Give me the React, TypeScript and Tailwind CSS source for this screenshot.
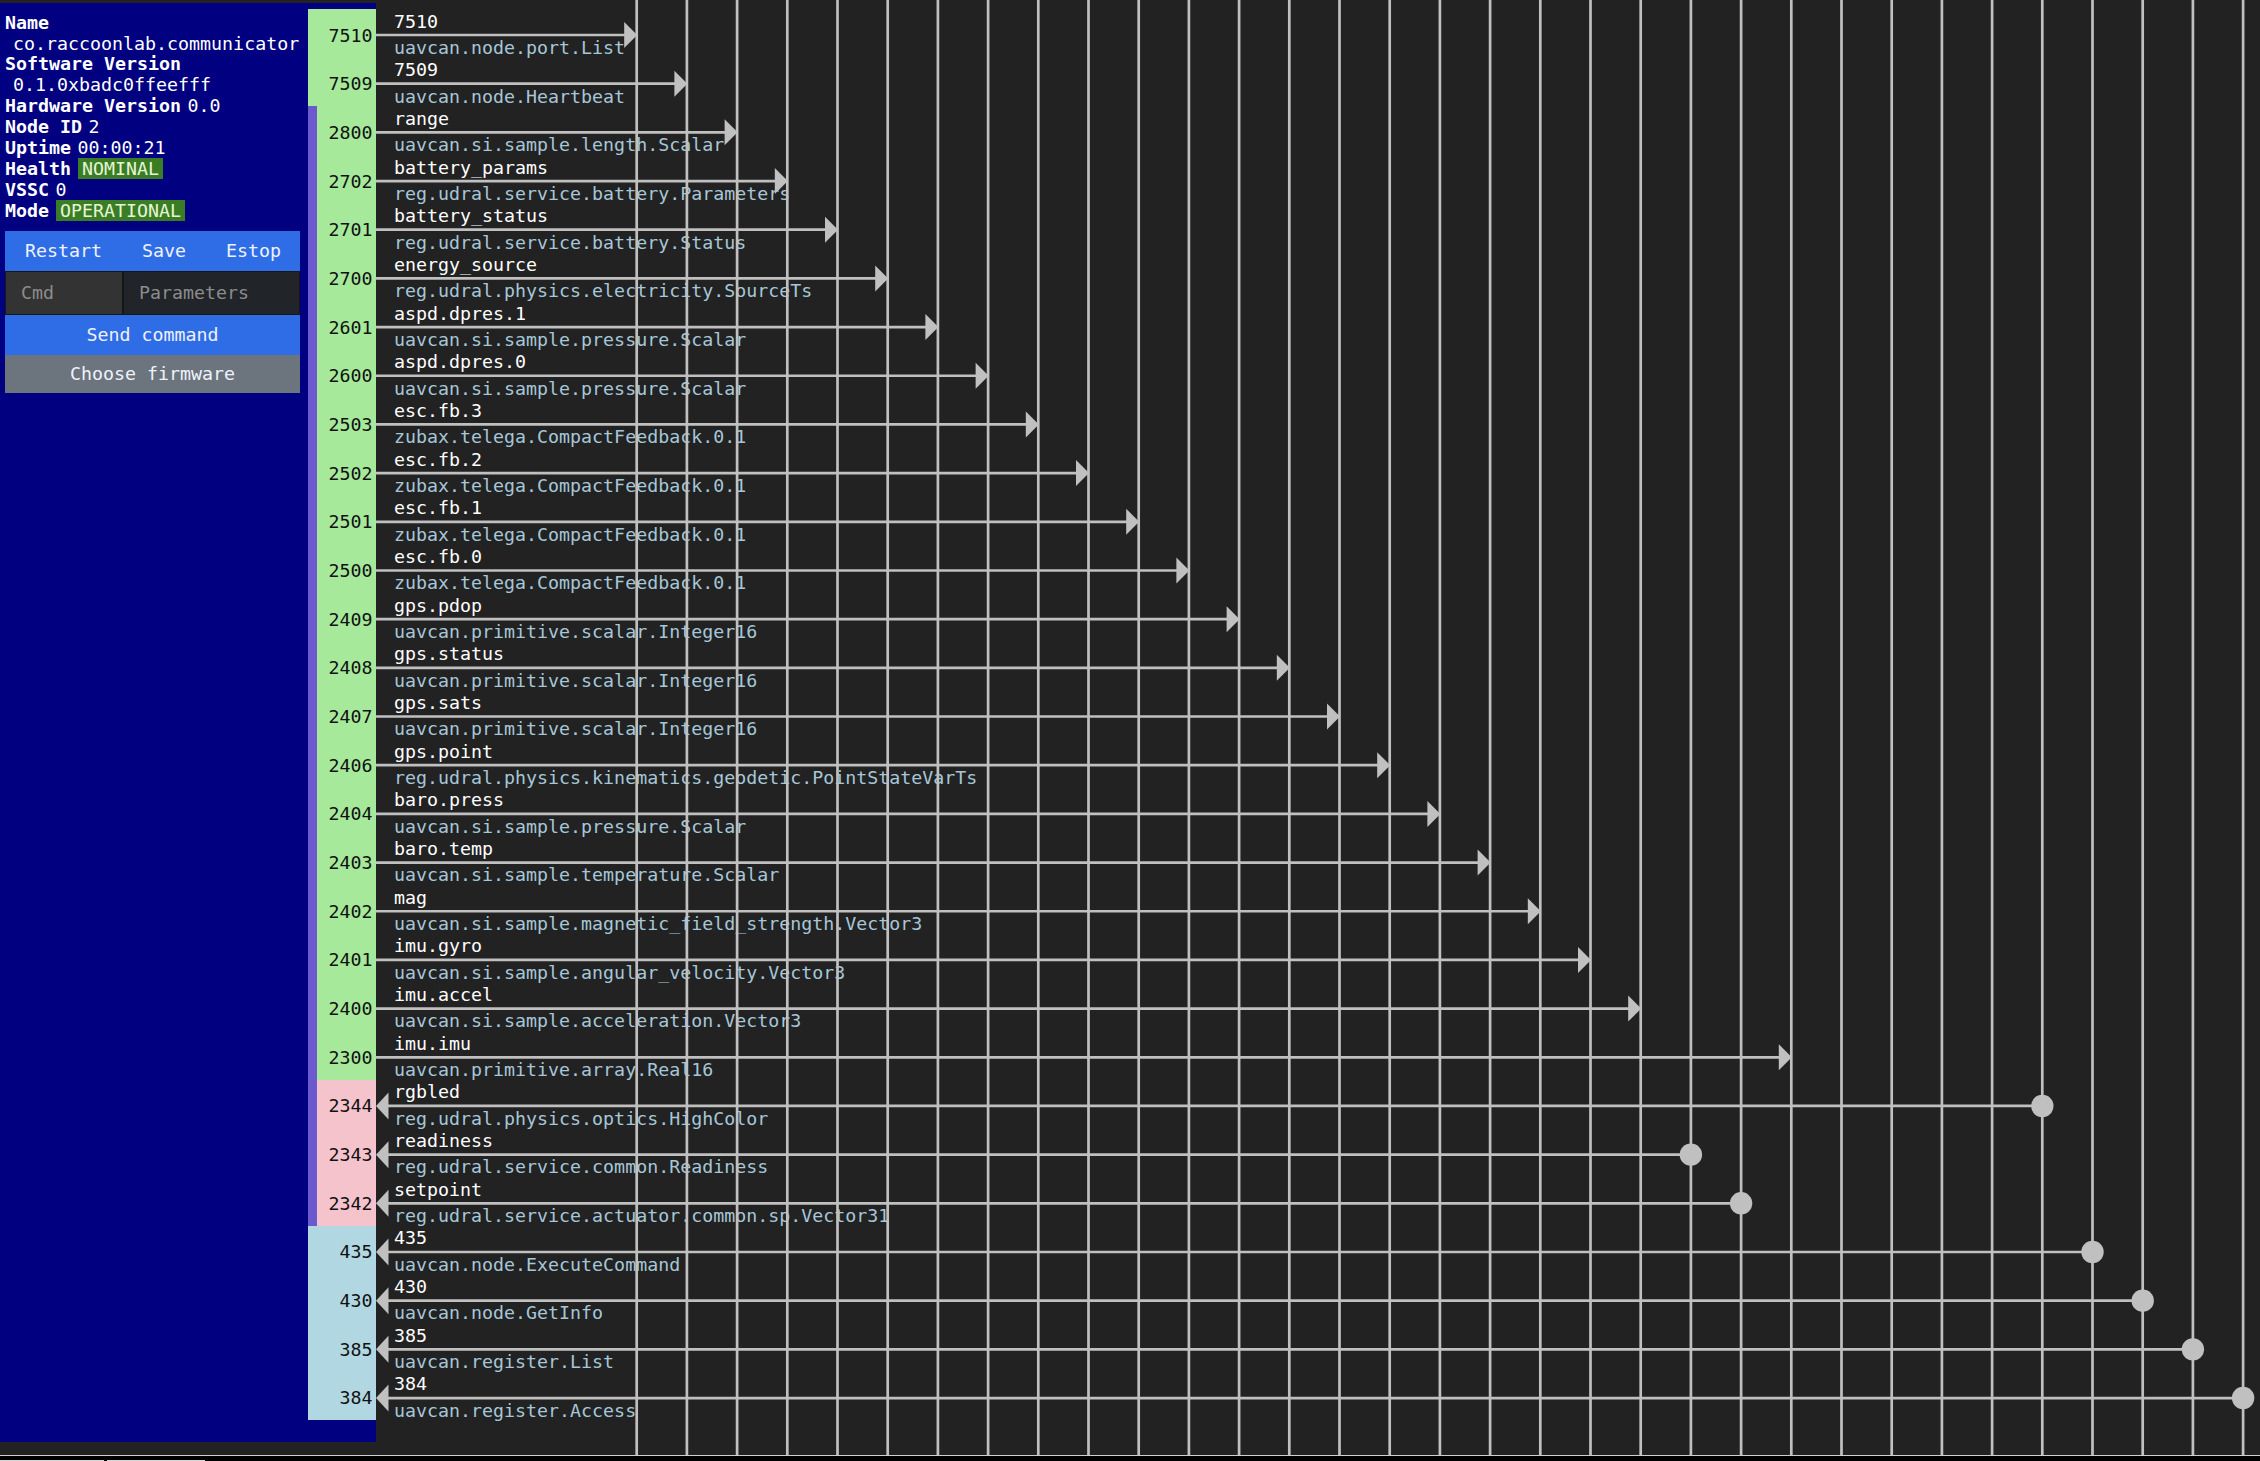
import React from 'react';

type Dir = 'out' | 'in';
type Row = { port: string; name: string; type: string; dir: Dir; col: number };

const rows: Row[] = [
  { port: '7510', name: '7510', type: 'uavcan.node.port.List', dir: 'out', col: 0 },
  { port: '7509', name: '7509', type: 'uavcan.node.Heartbeat', dir: 'out', col: 1 },
  { port: '2800', name: 'range', type: 'uavcan.si.sample.length.Scalar', dir: 'out', col: 2 },
  { port: '2702', name: 'battery_params', type: 'reg.udral.service.battery.Parameters', dir: 'out', col: 3 },
  { port: '2701', name: 'battery_status', type: 'reg.udral.service.battery.Status', dir: 'out', col: 4 },
  { port: '2700', name: 'energy_source', type: 'reg.udral.physics.electricity.SourceTs', dir: 'out', col: 5 },
  { port: '2601', name: 'aspd.dpres.1', type: 'uavcan.si.sample.pressure.Scalar', dir: 'out', col: 6 },
  { port: '2600', name: 'aspd.dpres.0', type: 'uavcan.si.sample.pressure.Scalar', dir: 'out', col: 7 },
  { port: '2503', name: 'esc.fb.3', type: 'zubax.telega.CompactFeedback.0.1', dir: 'out', col: 8 },
  { port: '2502', name: 'esc.fb.2', type: 'zubax.telega.CompactFeedback.0.1', dir: 'out', col: 9 },
  { port: '2501', name: 'esc.fb.1', type: 'zubax.telega.CompactFeedback.0.1', dir: 'out', col: 10 },
  { port: '2500', name: 'esc.fb.0', type: 'zubax.telega.CompactFeedback.0.1', dir: 'out', col: 11 },
  { port: '2409', name: 'gps.pdop', type: 'uavcan.primitive.scalar.Integer16', dir: 'out', col: 12 },
  { port: '2408', name: 'gps.status', type: 'uavcan.primitive.scalar.Integer16', dir: 'out', col: 13 },
  { port: '2407', name: 'gps.sats', type: 'uavcan.primitive.scalar.Integer16', dir: 'out', col: 14 },
  { port: '2406', name: 'gps.point', type: 'reg.udral.physics.kinematics.geodetic.PointStateVarTs', dir: 'out', col: 15 },
  { port: '2404', name: 'baro.press', type: 'uavcan.si.sample.pressure.Scalar', dir: 'out', col: 16 },
  { port: '2403', name: 'baro.temp', type: 'uavcan.si.sample.temperature.Scalar', dir: 'out', col: 17 },
  { port: '2402', name: 'mag', type: 'uavcan.si.sample.magnetic_field_strength.Vector3', dir: 'out', col: 18 },
  { port: '2401', name: 'imu.gyro', type: 'uavcan.si.sample.angular_velocity.Vector3', dir: 'out', col: 19 },
  { port: '2400', name: 'imu.accel', type: 'uavcan.si.sample.acceleration.Vector3', dir: 'out', col: 20 },
  { port: '2300', name: 'imu.imu', type: 'uavcan.primitive.array.Real16', dir: 'out', col: 23 },
  { port: '2344', name: 'rgbled', type: 'reg.udral.physics.optics.HighColor', dir: 'in', col: 28 },
  { port: '2343', name: 'readiness', type: 'reg.udral.service.common.Readiness', dir: 'in', col: 21 },
  { port: '2342', name: 'setpoint', type: 'reg.udral.service.actuator.common.sp.Vector31', dir: 'in', col: 22 },
  { port: '435', name: '435', type: 'uavcan.node.ExecuteCommand', dir: 'in', col: 29 },
  { port: '430', name: '430', type: 'uavcan.node.GetInfo', dir: 'in', col: 30 },
  { port: '385', name: '385', type: 'uavcan.register.List', dir: 'in', col: 31 },
  { port: '384', name: '384', type: 'uavcan.register.Access', dir: 'in', col: 32 },
];

const ROW_H = 48.68;
const colX = (k: number) => 260.7 + 50.2 * k;
const rowY = (i: number) => 35 + ROW_H * i;

function labelClass(i: number) {
  if (i < 2) return 'bg-[#a6e99a]';
  if (i < 22) return 'bg-[#a6e99a] border-l-[9px] border-[#6a5acd]';
  if (i < 25) return 'bg-[#f5c3cc] border-l-[9px] border-[#6a5acd]';
  return 'bg-[#b1d7e3]';
}

function Graph() {
  return (
    <svg className="absolute inset-0 pointer-events-none" width="1884" height="1455" viewBox="0 0 1884 1455">
      {Array.from({ length: 33 }).map((_, k) => (
        <line key={k} x1={colX(k)} x2={colX(k)} y1={0} y2={1455} stroke="#c0c0c0" strokeWidth={2.7} />
      ))}
      {rows.map((r, i) => {
        const y = rowY(i);
        const x = colX(r.col);
        if (r.dir === 'out') {
          return (
            <g key={r.port} fill="#c0c0c0">
              <line x1={0} x2={x - 10} y1={y} y2={y} stroke="#c0c0c0" strokeWidth={2.7} />
              <polygon points={`${x - 12.5},${y - 13} ${x + 0.5},${y} ${x - 12.5},${y + 13}`} />
            </g>
          );
        }
        return (
          <g key={r.port} fill="#c0c0c0">
            <line x1={8} x2={x} y1={y} y2={y} stroke="#c0c0c0" strokeWidth={2.7} />
            <polygon points={`0,${y} 12.5,${y - 13.5} 12.5,${y + 13.5}`} />
            <circle cx={x} cy={y} r={11.2} />
          </g>
        );
      })}
    </svg>
  );
}

function Badge({ children }: { children: React.ReactNode }) {
  return <span className="ml-[7px] px-[4px] bg-[#3a7d24] text-[#e6f5d6]">{children}</span>;
}

export default function App() {
  return (
    <div className="w-[2260px] h-[1461px] bg-[#222222] overflow-hidden flex flex-col font-['DejaVu_Sans_Mono','Liberation_Mono',monospace] text-[18.3px]">
      <div className="flex h-[1455px] shrink-0">
        {/* node panel */}
        <div className="w-[376px] shrink-0 mt-[3px] h-[1439px] bg-[#000080] flex">
          <div className="w-[308px] pl-[5px] pt-[9.6px] text-white leading-[20.93px]">
            <div className="font-bold">Name</div>
            <div className="pl-[8px]">co.raccoonlab.communicator</div>
            <div className="font-bold">Software Version</div>
            <div className="pl-[8px]">0.1.0xbadc0ffeefff</div>
            <div><b>Hardware Version</b><span className="ml-[6.5px]">0.0</span></div>
            <div><b>Node ID</b><span className="ml-[6.5px]">2</span></div>
            <div><b>Uptime</b><span className="ml-[6.5px]">00:00:21</span></div>
            <div><b>Health</b><Badge>NOMINAL</Badge></div>
            <div><b>VSSC</b><span className="ml-[6.5px]">0</span></div>
            <div><b>Mode</b><Badge>OPERATIONAL</Badge></div>

            <div className="w-[295px] mt-[9.1px] text-[#eef2fc]">
              <div className="flex h-[40px] bg-[#2f6de6]">
                <button className="px-[20px]">Restart</button>
                <button className="px-[20px]">Save</button>
                <button className="px-[20px]">Estop</button>
              </div>
              <div className="flex h-[44px]">
                <input
                  placeholder="Cmd"
                  className="w-[118px] bg-[#333333] border border-[#161616] pl-[15px] outline-none placeholder:text-[#8c8c8c]"
                />
                <input
                  placeholder="Parameters"
                  className="flex-1 min-w-0 bg-[#212428] border border-[#161616] pl-[15px] outline-none placeholder:text-[#8c8c8c]"
                />
              </div>
              <button className="w-full h-[40px] bg-[#2f6de6]">Send command</button>
              <button className="w-full h-[38px] bg-[#6c757d]">Choose firmware</button>
            </div>
          </div>

          {/* port labels */}
          <div className="w-[68px] mt-[6px] text-[#111]">
            {rows.map((r, i) => (
              <div key={r.port} className={`h-[48.68px] text-right pr-[3.5px] pt-[15.6px] leading-[21.3px] ${labelClass(i)}`}>
                {r.port}
              </div>
            ))}
          </div>
        </div>

        {/* port graph */}
        <div className="relative flex-1">
          <div className="pt-[9px] pl-[18px] leading-[21.3px] whitespace-nowrap">
            {rows.map((r) => (
              <div key={r.port} className="h-[48.68px]">
                <div className="pt-[1.6px] text-white">{r.name}</div>
                <div className="pt-[5px] text-[#a6c7d8]">{r.type}</div>
              </div>
            ))}
          </div>
          <Graph />
        </div>
      </div>

      {/* bottom tabs */}
      <div className="relative flex-1 bg-black border-t border-[#cfcfcf]">
        <div className="absolute bottom-0 left-0 w-[104px] h-[1.5px] bg-[#d8d8d8]" />
        <div className="absolute bottom-0 left-[107px] w-[98px] h-[1.5px] bg-[#d8d8d8]" />
      </div>
    </div>
  );
}
